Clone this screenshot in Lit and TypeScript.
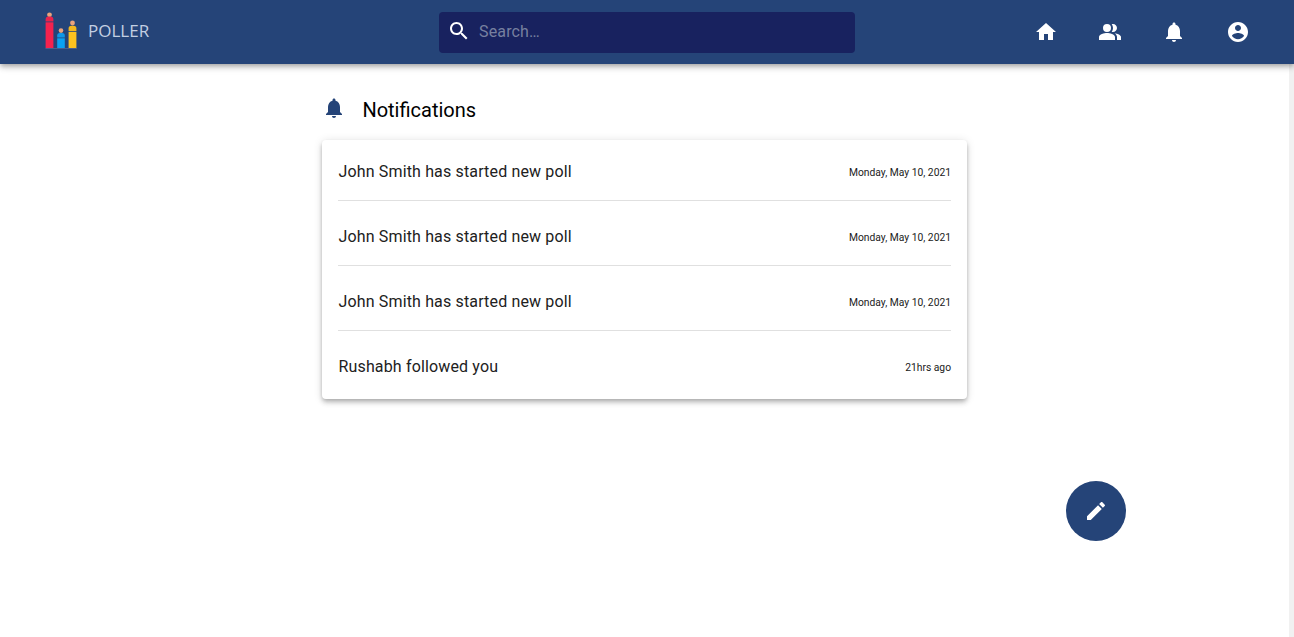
import { LitElement, html, css, svg } from "lit";
import { customElement } from "lit/decorators.js";

const P = {
  home: "M10 20v-6h4v6h5v-8h3L12 3 2 12h3v8z",
  people: "M16.67 13.13C18.04 14.06 19 15.32 19 17v3h4v-3c0-2.18-3.57-3.47-6.33-3.87zM9 4a4 4 0 1 0 0 8 4 4 0 0 0 0-8zM15 12c2.21 0 4-1.79 4-4s-1.79-4-4-4c-.47 0-.91.1-1.33.24C14.5 5.27 15 6.58 15 8s-.5 2.73-1.33 3.76c.42.14.86.24 1.33.24zM9 13c-2.67 0-8 1.34-8 4v3h16v-3c0-2.66-5.33-4-8-4z",
  bell: "M12 22c1.1 0 2-.9 2-2h-4c0 1.1.89 2 2 2zm6-6v-5c0-3.07-1.64-5.64-4.5-6.32V4c0-.83-.67-1.5-1.5-1.5s-1.5.67-1.5 1.5v.68C7.63 5.36 6 7.92 6 11v5l-2 2v1h16v-1l-2-2z",
  account: "M12 2C6.48 2 2 6.48 2 12s4.48 10 10 10 10-4.48 10-10S17.52 2 12 2zm0 3c1.66 0 3 1.34 3 3s-1.34 3-3 3-3-1.34-3-3 1.34-3 3-3zm0 14.2c-2.5 0-4.71-1.28-6-3.22.03-1.99 4-3.08 6-3.08 1.99 0 5.97 1.09 6 3.08-1.29 1.94-3.5 3.22-6 3.22z",
  edit: "M3 17.25V21h3.75L17.81 9.94l-3.75-3.75L3 17.25zM20.71 7.04c.39-.39.39-1.02 0-1.41l-2.34-2.34c-.39-.39-1.02-.39-1.41 0l-1.83 1.83 3.75 3.75 1.83-1.83z",
  search: "M15.5 14h-.79l-.28-.27C15.41 12.59 16 11.11 16 9.5 16 5.91 13.09 3 9.5 3S3 5.91 3 9.5 5.91 16 9.5 16c1.61 0 3.09-.59 4.23-1.57l.27.28v.79l5 4.99L20.49 19l-4.99-5zm-6 0C7.01 14 5 11.99 5 9.5S7.01 5 9.5 5 14 7.01 14 9.5 11.99 14 9.5 14z",
};

const icon = (d: string, cls = "") =>
  html`<svg class="icon ${cls}" viewBox="0 0 24 24" aria-hidden="true"><path d=${d}></path></svg>`;

const logo = svg`
  <line x1="0.5" y1="36.5" x2="32" y2="36.5" stroke="#4a5f8c" stroke-width="1"></line>
  <circle cx="4.5" cy="2.8" r="2.4" fill="#e9a27c"></circle>
  <path d="M.6 9.5V7.5a3 3 0 0 1 3-3h1.8a3 3 0 0 1 3 3v2z" fill="#e8234d"></path>
  <rect x=".6" y="10.3" width="7.8" height="25.7" fill="#f5224e"></rect>
  <circle cx="16" cy="18.6" r="2.3" fill="#e9a27c"></circle>
  <path d="M12.2 25.5V23.5a2.5 2.5 0 0 1 2.5-2.5h2.6a2.5 2.5 0 0 1 2.5 2.5v2z" fill="#0f97e6"></path>
  <rect x="12.2" y="26.3" width="7.6" height="9.7" fill="#0aa2f2"></rect>
  <circle cx="27.5" cy="11" r="2.4" fill="#e9a27c"></circle>
  <path d="M23.6 19V16.5a2.8 2.8 0 0 1 2.8-2.8h2.2a2.8 2.8 0 0 1 2.8 2.8V19z" fill="#f2b71f"></path>
  <rect x="23.6" y="19.8" width="7.8" height="16.2" fill="#fcc21f"></rect>
`;

const rows = [
  ["John Smith has started new poll", "Monday, May 10, 2021"],
  ["John Smith has started new poll", "Monday, May 10, 2021"],
  ["John Smith has started new poll", "Monday, May 10, 2021"],
  ["Rushabh followed you", "21hrs ago"],
];

@customElement("app-root")
export class AppRoot extends LitElement {
  static styles = css`
    :host {
      display: flex;
      flex-direction: column;
      position: relative;
      width: 100%;
      height: 637px;
      overflow: hidden;
      background: #fff;
      font-family: Roboto, sans-serif;
      color: #212121;
    }
    .icon { width: 24px; height: 24px; display: block; fill: currentColor; flex: none; }
    header {
      flex: none;
      height: 64px;
      background: #254478;
      color: #fff;
      display: grid;
      grid-template-columns: 1fr 416px 1fr;
      align-items: center;
      padding: 0 44px;
      box-shadow: 0 2px 4px -1px rgba(0,0,0,.2), 0 4px 5px 0 rgba(0,0,0,.14), 0 1px 10px 0 rgba(0,0,0,.12);
      position: relative;
      z-index: 2;
    }
    .brand { display: flex; align-items: center; gap: 11px; margin: -1px 0 0 1px; }
    .brand svg { width: 32px; height: 37px; display: block; margin-top: -2px; }
    .brand span {
      font-family: "Open Sans", sans-serif;
      font-size: 17px;
      color: #c3cfe2;
      margin-top: -2px;
    }
    .search {
      height: 41px;
      box-sizing: border-box;
      border-radius: 4px;
      background: #18225f;
      display: flex;
      align-items: center;
      gap: 8px;
      padding: 0 8px;
    }
    .search .icon { margin-top: -3px; }
    .search span { font-size: 16px; color: #77809f; letter-spacing: 0.15px; margin-top: -2px; }
    nav { display: flex; justify-content: flex-end; gap: 40px; margin-top: -1px; }
    main { flex: 1; display: flex; min-height: 0; }
    .content {
      flex: 1;
      display: flex;
      flex-direction: column;
      align-items: center;
      padding-top: 34px;
    }
    .track { flex: none; width: 5px; background: #f1f1f1; }
    .column { width: 645px; }
    .title { display: flex; align-items: center; height: 24px; gap: 16px; color: #000; }
    .title .icon { color: #254478; margin-top: -4px; }
    .title h1 { margin: 0; padding-left: .4px; font-size: 20px; font-weight: 400; line-height: 24px; }
    .card {
      margin-top: 18px;
      background: #fff;
      border-radius: 4px;
      padding: 0 16px;
      box-shadow: 0 2px 4px -1px rgba(0,0,0,.2), 0 4px 5px 0 rgba(0,0,0,.14), 0 1px 10px 0 rgba(0,0,0,.12);
    }
    .row {
      display: flex;
      align-items: center;
      justify-content: space-between;
      padding: 24px 0 16px;
      line-height: 24px;
      border-bottom: 1px solid #e0e0e0;
    }
    .row:first-child { padding-top: 20px; }
    .row:last-child { border-bottom: 0; padding-bottom: 20px; }
    .row .msg { font-size: 16px; letter-spacing: 0.15px; padding-left: .5px; }
    .row .when { font-size: 10.3px; line-height: 22px; margin-top: 2px; }
    .fab {
      position: absolute;
      left: 1066px;
      top: 481px;
      width: 60px;
      height: 60px;
      border-radius: 50%;
      background: #254478;
      color: #fff;
      display: flex;
      align-items: center;
      justify-content: center;
    }
  `;

  render() {
    return html`
      <header>
        <div class="brand">
          <svg viewBox="0 0 32 37">${logo}</svg>
          <span>POLLER</span>
        </div>
        <div class="search">${icon(P.search)}<span>Search…</span></div>
        <nav>${icon(P.home)}${icon(P.people)}${icon(P.bell)}${icon(P.account)}</nav>
      </header>
      <main>
        <div class="content">
          <div class="column">
            <div class="title">${icon(P.bell)}<h1>Notifications</h1></div>
            <div class="card">
              ${rows.map(
                ([m, w]) => html`<div class="row"><span class="msg">${m}</span><span class="when">${w}</span></div>`
              )}
            </div>
          </div>
        </div>
        <div class="track"></div>
      </main>
      <div class="fab">${icon(P.edit)}</div>
    `;
  }
}
